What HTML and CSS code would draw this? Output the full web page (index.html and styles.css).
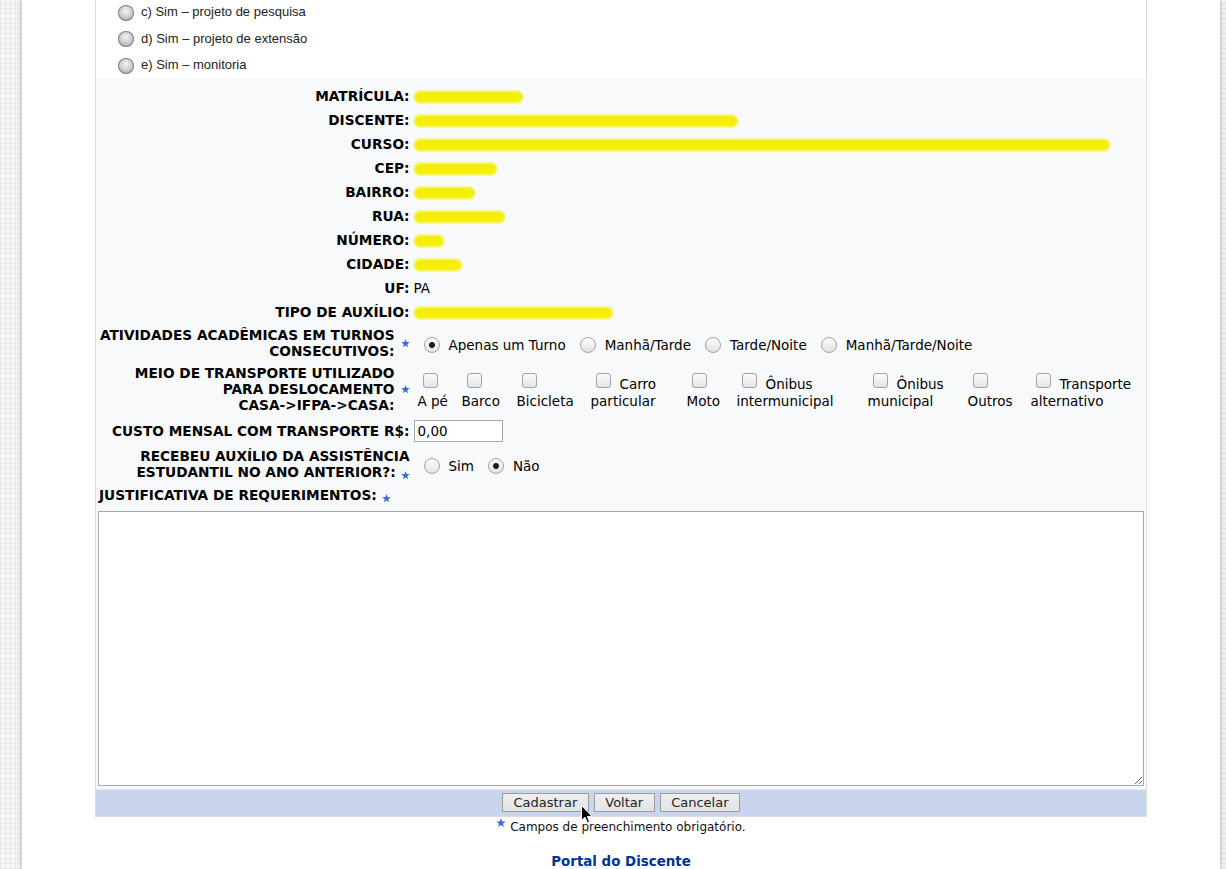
FILE: index.html
```html
<!DOCTYPE html>
<html lang="pt-BR">
<head>
<meta charset="utf-8">
<title>Solicitação de Auxílio</title>
<link rel="stylesheet" href="styles.css">
</head>
<body>
<div class="page">
  <table class="form">
    <tbody class="opts">
      <tr>
        <td colspan="2">
          <ul class="choices">
            <li><span class="sphere"></span>c) Sim – projeto de pesquisa</li>
            <li><span class="sphere"></span>d) Sim – projeto de extensão</li>
            <li><span class="sphere"></span>e) Sim – monitoria</li>
          </ul>
        </td>
      </tr>
    </tbody>
    <tbody class="fields">
      <tr class="first"><th>MATRÍCULA:</th><td><span class="redact r-mat"></span></td></tr>
      <tr><th>DISCENTE:</th><td><span class="redact r-disc"></span></td></tr>
      <tr><th>CURSO:</th><td><span class="redact r-curso"></span></td></tr>
      <tr><th>CEP:</th><td><span class="redact r-cep"></span></td></tr>
      <tr><th>BAIRRO:</th><td><span class="redact r-bairro"></span></td></tr>
      <tr><th>RUA:</th><td><span class="redact r-rua"></span></td></tr>
      <tr><th>NÚMERO:</th><td><span class="redact r-num"></span></td></tr>
      <tr><th>CIDADE:</th><td><span class="redact r-cid"></span></td></tr>
      <tr><th>UF:</th><td>PA</td></tr>
      <tr><th>TIPO DE AUXÍLIO:</th><td><span class="redact r-tipo"></span></td></tr>
      <tr class="multi">
        <th>
          <div class="req">
            <span>ATIVIDADES ACADÊMICAS EM TURNOS<br>CONSECUTIVOS:</span>
            <svg class="star" viewBox="0 0 10 10"><polygon points="5,0 6.2,3.4 9.8,3.5 6.9,5.7 7.9,9.2 5,7.1 2.1,9.2 3.1,5.7 0.2,3.5 3.8,3.4"/></svg>
          </div>
        </th>
        <td>
          <div class="radios">
            <label><input type="radio" name="turnos" checked>Apenas um Turno</label>
            <label><input type="radio" name="turnos">Manhã/Tarde</label>
            <label><input type="radio" name="turnos">Tarde/Noite</label>
            <label><input type="radio" name="turnos">Manhã/Tarde/Noite</label>
          </div>
        </td>
      </tr>
      <tr class="multi transport-row">
        <th>
          <div class="req">
            <span>MEIO DE TRANSPORTE UTILIZADO<br>PARA DESLOCAMENTO<br>CASA-&gt;IFPA-&gt;CASA:</span>
            <svg class="star" viewBox="0 0 10 10"><polygon points="5,0 6.2,3.4 9.8,3.5 6.9,5.7 7.9,9.2 5,7.1 2.1,9.2 3.1,5.7 0.2,3.5 3.8,3.4"/></svg>
          </div>
        </th>
        <td>
          <div class="transport">
            <label><input type="checkbox"><br>A pé</label>
            <label><input type="checkbox"><br>Barco</label>
            <label><input type="checkbox"><br>Bicicleta</label>
            <label><input type="checkbox">Carro<br>particular</label>
            <label><input type="checkbox"><br>Moto</label>
            <label><input type="checkbox">Ônibus<br>intermunicipal</label>
            <label><input type="checkbox">Ônibus<br>municipal</label>
            <label><input type="checkbox"><br>Outros</label>
            <label><input type="checkbox">Transporte<br>alternativo</label>
          </div>
        </td>
      </tr>
      <tr class="cost"><th>CUSTO MENSAL COM TRANSPORTE R$:</th><td><input class="money" type="text" value="0,00"></td></tr>
      <tr class="multi">
        <th>RECEBEU AUXÍLIO DA ASSISTÊNCIA<br>ESTUDANTIL NO ANO ANTERIOR?: <svg class="star inline" viewBox="0 0 10 10"><polygon points="5,0 6.2,3.4 9.8,3.5 6.9,5.7 7.9,9.2 5,7.1 2.1,9.2 3.1,5.7 0.2,3.5 3.8,3.4"/></svg></th>
        <td>
          <div class="radios">
            <label><input type="radio" name="anterior">Sim</label>
            <label><input type="radio" name="anterior" checked>Não</label>
          </div>
        </td>
      </tr>
      <tr class="just"><th colspan="2" class="left">JUSTIFICATIVA DE REQUERIMENTOS: <svg class="star inline" viewBox="0 0 10 10"><polygon points="5,0 6.2,3.4 9.8,3.5 6.9,5.7 7.9,9.2 5,7.1 2.1,9.2 3.1,5.7 0.2,3.5 3.8,3.4"/></svg></th></tr>
      <tr><td colspan="2" class="area"><textarea></textarea></td></tr>
    </tbody>
    <tfoot>
      <tr>
        <td colspan="2">
          <div class="actions">
            <button type="button">Cadastrar</button>
            <button type="button">Voltar</button>
            <button type="button">Cancelar</button>
            <svg class="cursor" viewBox="0 0 12 19"><path d="M0.5 0.5 L0.5 15.5 L4 12.2 L6.4 17.8 L8.6 16.9 L6.3 11.4 L11 11.4 Z"/></svg>
          </div>
        </td>
      </tr>
    </tfoot>
  </table>
  <p class="legend"><svg class="star sup" viewBox="0 0 10 10"><polygon points="5,0 6.2,3.4 9.8,3.5 6.9,5.7 7.9,9.2 5,7.1 2.1,9.2 3.1,5.7 0.2,3.5 3.8,3.4"/></svg> Campos de preenchimento obrigatório.</p>
  <p class="portal"><a href="#">Portal do Discente</a></p>
</div>
</body>
</html>
```

FILE: styles.css
```css
html, body {
  margin: 0;
  padding: 0;
}

body {
  font-family: "DejaVu Sans", Verdana, sans-serif;
  font-size: 13.5px;
  color: #000;
  background-color: #f6f6f6;
  background-image:
    repeating-linear-gradient(0deg, rgba(0,0,0,0.05) 0 1px, transparent 1px 5px),
    repeating-linear-gradient(90deg, rgba(0,0,0,0.05) 0 1px, transparent 1px 5px);
}

.page {
  margin-left: 22px;
  width: 1198px;
  min-height: 869px;
  background: #fff;
  box-shadow: 0 0 6px rgba(0, 0, 0, 0.28);
  overflow: hidden;
}

.form {
  width: 1052px;
  margin: 0 auto;
  border-collapse: collapse;
  border: 1px solid #dcdcdc;
  border-top: 0;
}

/* top choice list */
.opts td {
  background: #fff;
  padding: 0;
}

.choices {
  list-style: none;
  margin: -1.5px 0 0;
  padding: 0 0 0 22px;
  font-family: "Liberation Sans", Arial, sans-serif;
  font-size: 13px;
  color: #222;
}

.choices li {
  height: 26.5px;
  display: flex;
  align-items: center;
}

.sphere {
  width: 16px;
  height: 16px;
  border-radius: 50%;
  margin-right: 7px;
  margin-top: 2px;
  background: radial-gradient(circle at 50% 38%, #f1f2f4 0, #cdd0d4 45%, #979ba1 85%, #797d83 100%);
  box-shadow: inset 0 0 0 1px #84888d;
}

/* field rows */
.fields {
  background: #f8f9fb;
}

.fields th,
.fields td {
  padding: 4px 2px;
  line-height: 16px;
  vertical-align: middle;
}

.fields th {
  box-sizing: border-box;
  width: 316px;
  text-align: right;
  font-weight: bold;
  font-size: 13.7px;
  white-space: nowrap;
}

.fields td {
  text-align: left;
}

.fields tr.first th,
.fields tr.first td {
  padding-top: 10px;
}

.fields tr.multi th,
.fields tr.multi td {
  padding-top: 3px;
  padding-bottom: 2px;
}

.fields tr.transport-row th,
.fields tr.transport-row td {
  padding-top: 4px;
  padding-bottom: 2px;
}

.fields tr.just th {
  padding-top: 5px;
}

.fields th.left {
  text-align: left;
  padding-left: 3px;
}

.req {
  display: flex;
  justify-content: flex-end;
  align-items: center;
  gap: 6px;
}

.star {
  width: 9px;
  height: 9px;
  fill: #3d6ad6;
  flex: none;
}

.star.inline {
  vertical-align: -3px;
}

.star.sup {
  width: 10px;
  height: 10px;
  vertical-align: 3px;
}

/* redaction blobs */
.redact {
  display: inline-block;
  height: 12px;
  border-radius: 6px;
  background: #f4ee08;
  filter: blur(1.3px);
  vertical-align: middle;
}

.r-mat { width: 109px; }
.r-disc { width: 324px; }
.r-curso { width: 696px; }
.r-cep { width: 83px; }
.r-bairro { width: 61px; }
.r-rua { width: 91px; }
.r-num { width: 30px; }
.r-cid { width: 48px; }
.r-tipo { width: 199px; }

/* radios */
.radios {
  display: flex;
  align-items: center;
  gap: 14px;
  padding-left: 10px;
  padding-top: 3px;
}

.radios label {
  display: flex;
  align-items: center;
}

input[type="radio"] {
  appearance: none;
  -webkit-appearance: none;
  width: 16px;
  height: 16px;
  margin: 0 9px 0 0;
  border: 1px solid #a4a4a4;
  border-radius: 50%;
  background: linear-gradient(#fdfdfd, #e2e2e2);
  box-sizing: border-box;
}

input[type="radio"]:checked {
  background:
    radial-gradient(circle, #1c1c1c 0 2.6px, transparent 3.3px),
    linear-gradient(#fdfdfd, #e2e2e2);
}

/* transport checkboxes */
.transport {
  display: grid;
  grid-template-columns: 44px 55px 74px 96px 50px 131px 100px 63px 110px;
  padding-left: 4px;
  line-height: 17px;
  padding-top: 4px;
}

.transport label {
  display: block;
}

input[type="checkbox"] {
  appearance: none;
  -webkit-appearance: none;
  width: 15px;
  height: 15px;
  margin: 0 9px 1px 5px;
  border: 1px solid #a4a4a4;
  border-radius: 3px;
  background: linear-gradient(#fcfcfc, #e3e3e3);
  box-sizing: border-box;
  vertical-align: baseline;
}

/* cost input */
.fields tr.cost th,
.fields tr.cost td {
  padding-top: 5px;
  padding-bottom: 3px;
}

.money {
  box-sizing: border-box;
  width: 89px;
  height: 22px;
  border: 1px solid #a9a9a9;
  padding: 0 3px;
  font-family: "DejaVu Sans", Verdana, sans-serif;
  font-size: 13.5px;
  background: #fff;
  color: #000;
}

/* textarea */
.fields td.area {
  padding: 4px 2px 3px;
}

.area textarea {
  display: block;
  box-sizing: border-box;
  width: 100%;
  height: 275px;
  border: 1px solid #a9a9a9;
  background: #fff;
  resize: both;
}

/* footer buttons */
.form tfoot td {
  background: #c8d5ec;
  padding: 3px 0 4px;
  border-top: 1px solid #e4e8ef;
}

.actions {
  position: relative;
  display: flex;
  justify-content: center;
  gap: 5px;
}

.actions button {
  height: 19px;
  padding: 0 10.5px;
  border: 1px solid #9b9b9b;
  border-radius: 0;
  background: linear-gradient(#efefef, #e3e3e3);
  font-family: "DejaVu Sans", Verdana, sans-serif;
  font-size: 13px;
  line-height: 16px;
  color: #222;
}

.cursor {
  position: absolute;
  left: 485px;
  top: 12px;
  width: 12px;
  height: 19px;
  fill: #000;
  stroke: #fff;
  stroke-width: 1;
}

.legend {
  margin: 1px 0 0;
  text-align: center;
  font-size: 12px;
  line-height: 16px;
  color: #111;
}

.portal {
  margin: 19px 0 0;
  text-align: center;
  font-size: 13.4px;
  font-weight: bold;
}

.portal a {
  color: #003399;
  text-decoration: none;
}
```
